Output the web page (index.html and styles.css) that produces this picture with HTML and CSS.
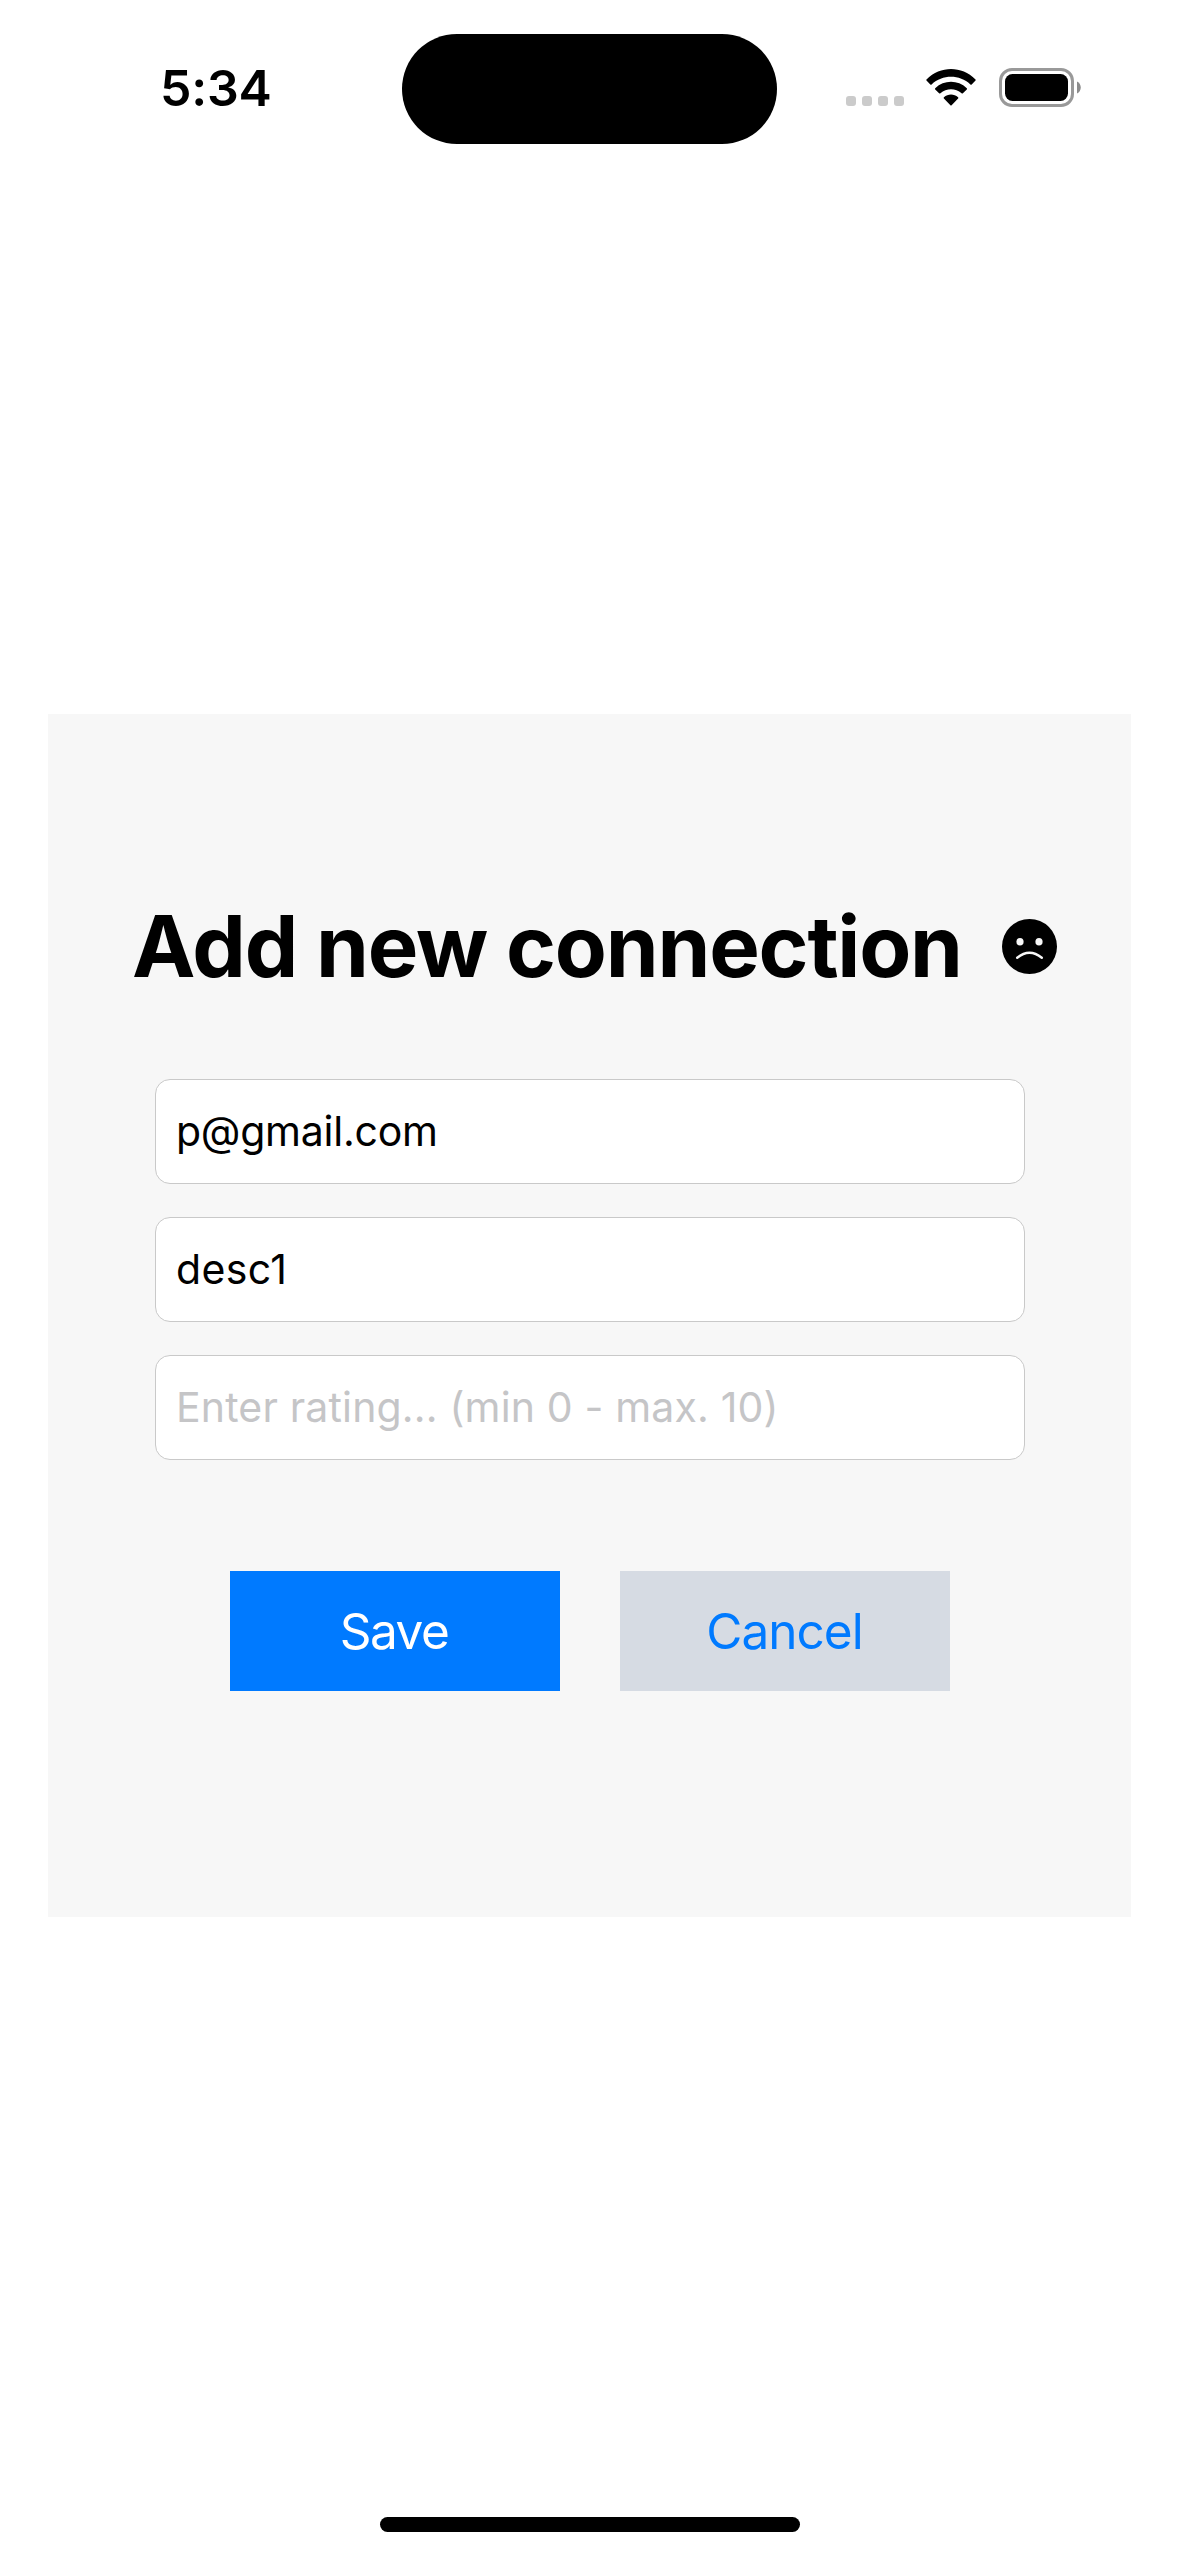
FILE: index.html
```html
<!DOCTYPE html>
<html lang="en">
<head>
<meta charset="utf-8">
<title>Add new connection</title>
<link rel="stylesheet" href="styles.css">
</head>
<body>
<div class="screen">
  <header class="status-bar">
    <span class="clock">5:34</span>
    <div class="island"></div>
    <div class="indicators">
      <div class="cellular"><i></i><i></i><i></i><i></i></div>
      <svg class="wifi" viewBox="0 0 50 37" width="50" height="37" aria-hidden="true">
        <path d="M.5 10.4Q0 11 .5 11.6L4.3 15.4Q5 16 5.6 15.4C16.5 5.3 33.5 5.3 44.4 15.4Q45 16 45.7 15.4L49.5 11.6Q50 11 49.5 10.4C35.5-3.4 14.5-3.4.5 10.4Z"/>
        <path d="M9.2 19.2Q8.7 19.9 9.2 20.5L13.1 24.3Q13.8 24.9 14.4 24.3C20.5 18.9 29.5 18.9 35.6 24.3Q36.2 24.9 36.9 24.3L40.8 20.5Q41.3 19.9 40.8 19.2C31.8 10.7 18.2 10.7 9.2 19.2Z"/>
        <path d="M17.9 28.2Q17.3 28.9 17.9 29.5L24.4 36.3Q25 36.9 25.6 36.3L32.1 29.5Q32.7 28.9 32.1 28.2C28 24.7 22 24.7 17.9 28.2Z"/>
      </svg>
      <svg class="battery" viewBox="0 0 82 39" width="82" height="39" aria-hidden="true">
        <rect x="1.5" y="1.5" width="72" height="36" rx="11.5" fill="none" stroke="#999" stroke-width="3"/>
        <rect x="6" y="6" width="63" height="27" rx="7.5"/>
        <path d="M78 13.500C83 15.500 83 23.500 78 25.500Z" fill="#8c8c8c"/>
      </svg>
    </div>
  </header>

  <main class="card">
    <div class="heading">
      <h1>Add new connection</h1>
      <svg viewBox="0 0 55 55" width="55" height="55" aria-hidden="true">
        <circle cx="27.500" cy="27.500" r="27.500"/>
        <ellipse cx="18" cy="22.800" rx="3.600" ry="3.800" fill="#f7f7f7"/>
        <ellipse cx="37" cy="22.800" rx="3.600" ry="3.800" fill="#f7f7f7"/>
        <path d="M15.200 38.800Q27.500 28.800 39.800 38.800" fill="none" stroke="#f7f7f7" stroke-width="2.400" stroke-linecap="round"/>
      </svg>
    </div>
    <form class="fields">
      <input class="email" type="text" value="p@gmail.com" aria-label="Email">
      <input class="description" type="text" value="desc1" aria-label="Description">
      <input class="rating" type="text" placeholder="Enter rating... (min 0 - max. 10)" aria-label="Rating">
    </form>
    <div class="actions">
      <button class="save" type="button">Save</button>
      <button class="cancel" type="button">Cancel</button>
    </div>
  </main>

  <div class="home-indicator"></div>
</div>
</body>
</html>
```
FILE: styles.css
```css
* {
  box-sizing: border-box;
}

body {
  margin: 0;
  background: #fff;
  color: #000;
  font-family: Inter, "Liberation Sans", sans-serif;
}

.screen {
  display: flex;
  flex-direction: column;
  width: 1179px;
  height: 2556px;
}

.status-bar {
  display: grid;
  grid-template-columns: 402px 375px 402px;
  align-items: center;
  height: 175px;
}

.clock {
  padding-left: 160px;
  font-size: 50px;
  font-weight: 600;
  letter-spacing: -0.2px;
  line-height: 60px;
}

.island {
  height: 110px;
  margin-top: 2px;
  border-radius: 55px;
  background: #000;
}

.indicators {
  display: flex;
  align-items: center;
  padding-left: 69px;
}

.cellular {
  display: flex;
  gap: 6px;
  padding-top: 27px;
}

.cellular i {
  width: 10px;
  height: 10px;
  border-radius: 3px;
  background: #cbcbcb;
}

.wifi {
  margin-left: 22px;
}

.battery {
  margin-left: 23px;
}

.card {
  width: 1083px;
  height: 1203px;
  margin: 539px 48px 0;
  padding-top: 177px;
  background: #f7f7f7;
}

.heading {
  display: flex;
  align-items: center;
  height: 110px;
  padding-left: 84px;
}

h1 {
  width: 870px;
  margin: 0;
  padding-top: 2px;
  font-size: 85px;
  font-weight: 700;
  letter-spacing: -1.2px;
  line-height: 110px;
  white-space: nowrap;
}

.fields {
  display: flex;
  flex-direction: column;
  gap: 33px;
  width: 870px;
  margin: 78px 0 0 107px;
}

.fields input {
  width: 100%;
  height: 105px;
  margin: 0;
  padding: 0 20px 2px;
  border: 1px solid #c9c9c9;
  border-radius: 15px;
  outline: none;
  background: #fff;
  color: #000;
  font: 400 41px Inter, "Liberation Sans", sans-serif;
}

.fields .email {
  letter-spacing: -0.25px;
}

.fields .description {
  letter-spacing: 0.4px;
}

.fields .rating {
  letter-spacing: 0.16px;
}

.fields input::placeholder {
  color: #c5c5c7;
  opacity: 1;
}

.actions {
  display: flex;
  gap: 60px;
  margin: 111px 0 0 182px;
}

.actions button {
  width: 330px;
  height: 120px;
  padding: 0;
  border: 0;
  font: 400 49.500px Inter, "Liberation Sans", sans-serif;
}

.actions .save {
  padding-right: 2px;
  background: #007aff;
  color: #fff;
  letter-spacing: -1.5px;
}

.actions .cancel {
  padding-right: 1px;
  background: #d6dbe3;
  color: #007aff;
  letter-spacing: -1px;
}

.home-indicator {
  width: 420px;
  height: 15px;
  margin: auto auto 24px 380px;
  border-radius: 7.500px;
  background: #000;
}
```
